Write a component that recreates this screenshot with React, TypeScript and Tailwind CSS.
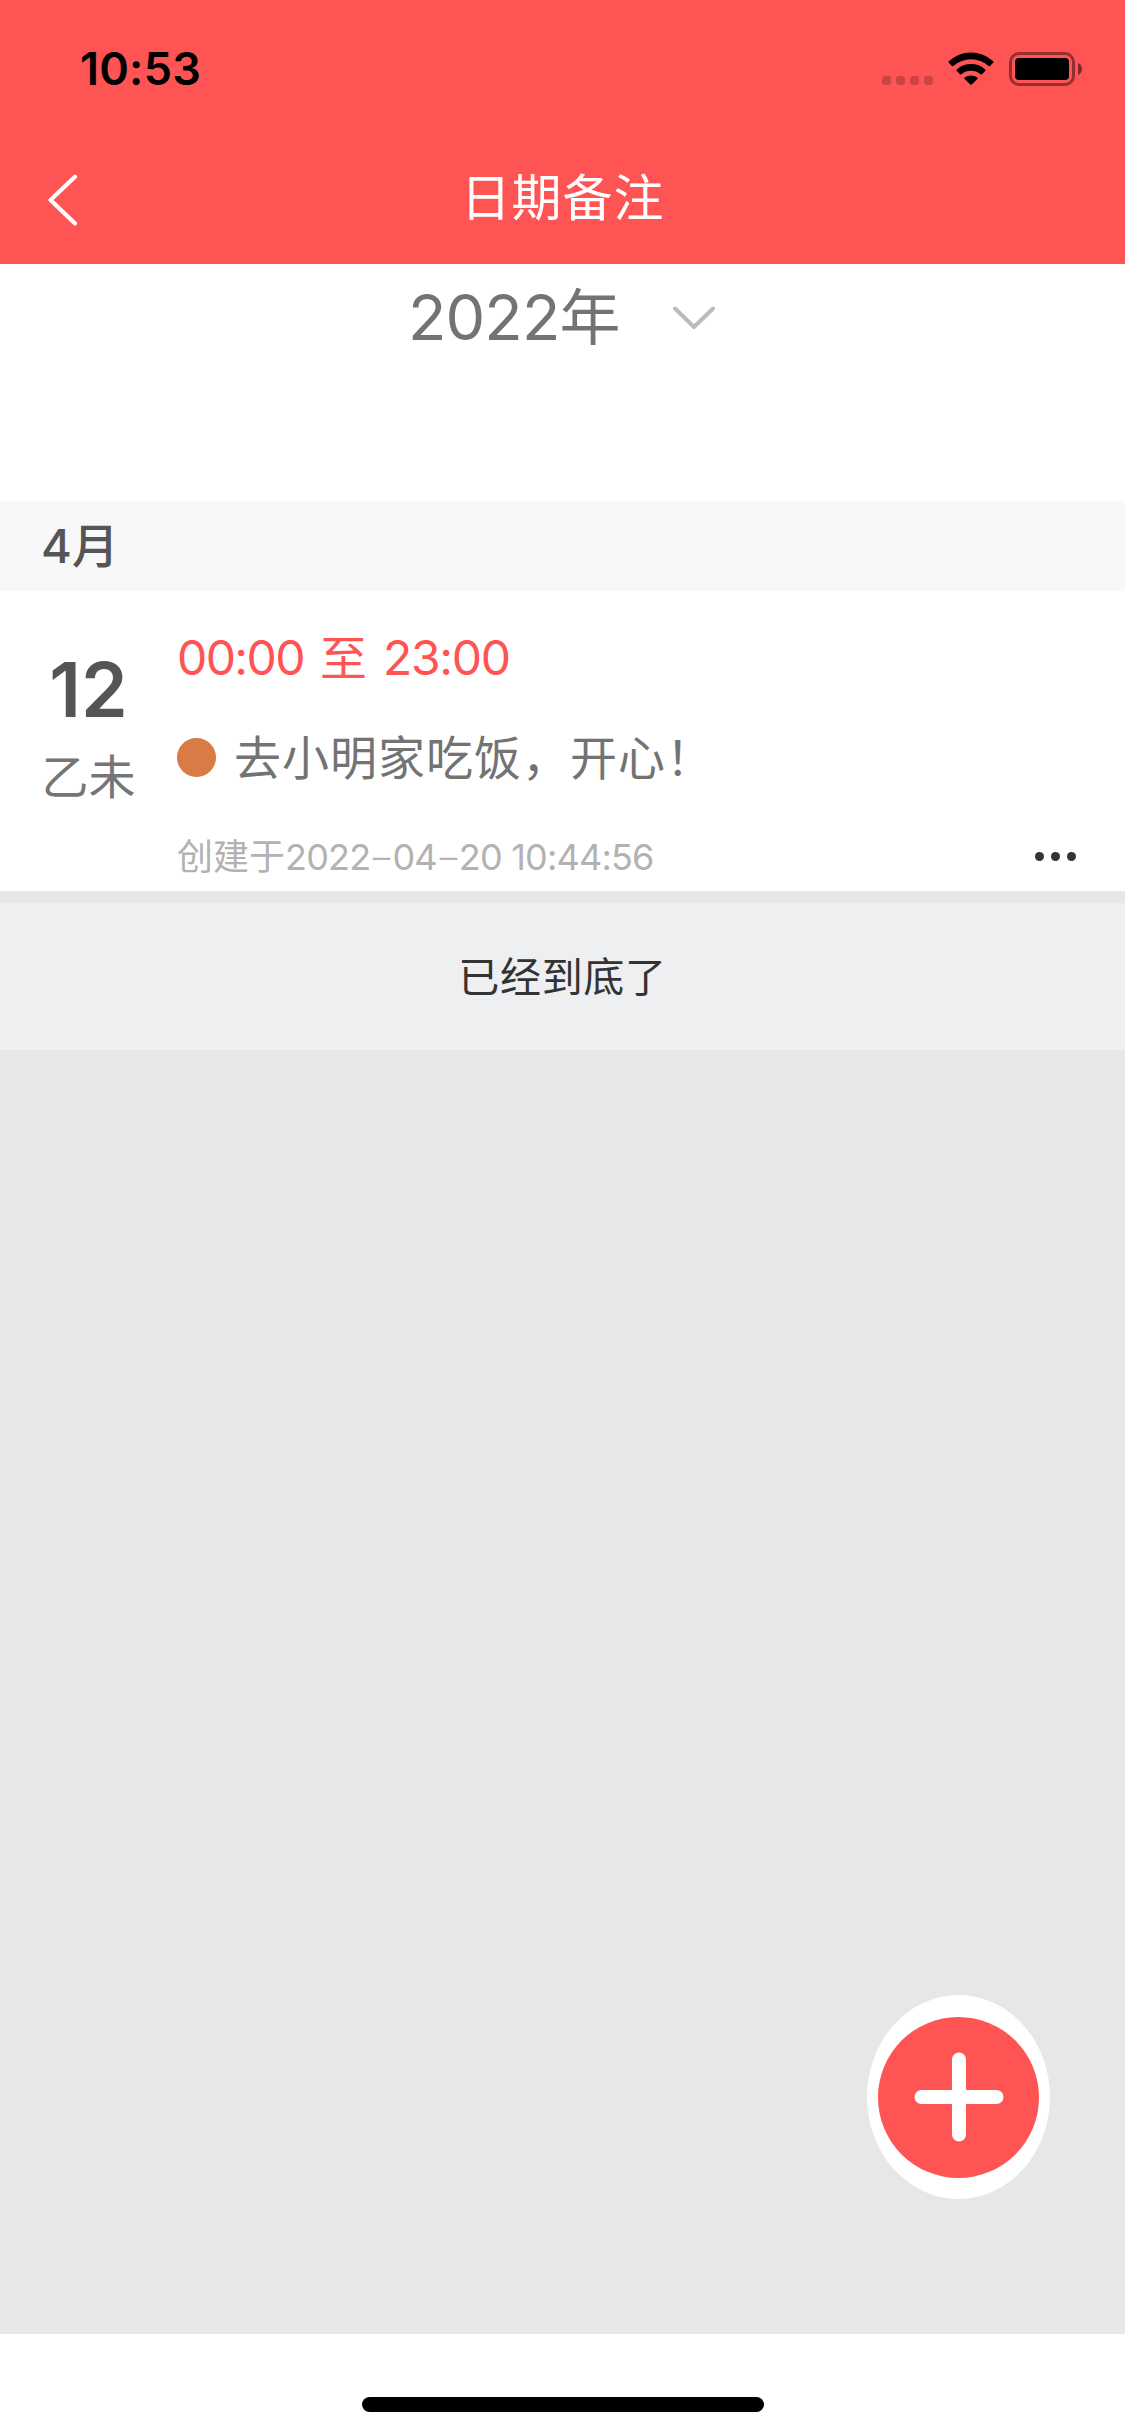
import type { ReactNode } from "react";

function Num({ children, className = "" }: { children: ReactNode; className?: string }) {
  return <span className={`font-['Inter',sans-serif] ${className}`}>{children}</span>;
}

function Dash() {
  return <span className="inline-block w-[22px] scale-x-[1.6] text-center font-light">-</span>;
}

function StatusBar() {
  return (
    <div className="flex h-[132px] items-start justify-between pl-[80px] pr-[43px] text-black">
      <Num className="mt-[41px] text-[45px] leading-[56px] font-semibold tracking-[0.200px]">10:53</Num>
      <div className="mt-[52px] flex items-start">
        <div className="mt-[24px] flex gap-[5px]">
          {[0, 1, 2, 3].map((i) => (
            <span key={i} className="size-[9px] rounded-[3px] bg-black/20" />
          ))}
        </div>
        <svg className="ml-[15px] h-[33px] w-[46px]" viewBox="0 0 46 33">
          <path d="M0.8 9.2Q0 10 0.8 10.700L4 14Q4.600 14.600 5.400 14A26.5 26.5 0 0 1 40.600 14Q41.400 14.600 42 14L45.200 10.700Q46 10 45.200 9.200A32.6 32.6 0 0 0 0.8 9.2Z" />
          <path d="M8.800 17.500Q8 18.200 8.800 19L12 22.200Q12.600 22.800 13.400 22.200A15.2 15.2 0 0 1 32.600 22.200Q33.400 22.800 34 22.200L37.200 19Q38 18.200 37.200 17.500A21.3 21.3 0 0 0 8.800 17.500Z" />
          <path d="M16.600 25.600Q16 26.300 16.600 27L22.300 32.600Q23 33.300 23.700 32.600L29.400 27Q30 26.300 29.400 25.600A10.500 10.500 0 0 0 16.600 25.600Z" />
        </svg>
        <svg className="ml-[15px] h-[34px] w-[73px]" viewBox="0 0 73 34">
          <rect x="1.5" y="1.5" width="63" height="31" rx="8.5" fill="none" stroke="#000" strokeOpacity="0.42" strokeWidth="3" />
          <rect x="6" y="6" width="54" height="22" rx="4" />
          <path d="M69 11Q73 12.500 73 17T69 23Z" fillOpacity="0.5" />
        </svg>
      </div>
    </div>
  );
}

function Header() {
  return (
    <header className="h-[264px] bg-[#ff5454]">
      <StatusBar />
      <div className="grid h-[132px] grid-cols-[120px_1fr_120px] items-start">
        <svg className="mt-[42px] ml-[47px] h-[52px] w-[32px]" viewBox="0 0 32 52" fill="none" stroke="#fff" strokeWidth="4.200" strokeLinecap="round" strokeLinejoin="round">
          <path d="M28 2.800L3.500 26L28 49.500" />
        </svg>
        <h1 className="mt-[26px] text-center text-[50px] leading-[72px] tracking-[0.900px] text-white">日期备注</h1>
      </div>
    </header>
  );
}

function YearPicker() {
  return (
    <div className="flex h-[237px] items-start pt-[10px] pl-[408px]">
      <span className="text-[61px] leading-[80px] text-[#737373]">
        <Num className="text-[63px] tracking-[-0.900px]">2022</Num>年
      </span>
      <svg className="mt-[31px] ml-[52px] h-[26px] w-[44px]" viewBox="0 0 44 26" fill="none" stroke="#bbb" strokeWidth="4" strokeLinecap="round" strokeLinejoin="round">
        <path d="M3 3.500L22 22L41 3.500" />
      </svg>
    </div>
  );
}

function NoteItem() {
  return (
    <article className="flex h-[300px] bg-white">
      <div className="flex w-[177px] flex-col items-center pt-[54px]">
        <Num className="text-[75px] leading-[90px] font-semibold text-[#555]">12</Num>
        <span className="mt-[5px] text-[47px] leading-[68px] text-[#757575]">乙未</span>
      </div>
      <div className="flex flex-1 flex-col pt-[30px] pr-[49px]">
        <div className="flex h-[71px] items-baseline text-[47px] leading-[68px] text-[#ff5454]">
          <Num className="w-[126px] text-[48px] tracking-[-1.600px]">00:00</Num>
          <span className="mr-[16px] ml-[17px]">至</span>
          <Num className="text-[48px] tracking-[-1.300px]">23:00</Num>
        </div>
        <div className="mt-[31px] flex items-center">
          <span className="size-[39px] rounded-full bg-[#d97b45]" />
          <span className="relative -top-[2px] ml-[18px] text-[47px] leading-[68px] tracking-[1px] text-[#737373]">去小明家吃饭，开心！</span>
        </div>
        <div className="mt-[38px] flex items-center justify-between">
          <span className="relative -top-px text-[36px] leading-[52px] text-[#b2b2b2]">
            创建于<Num className="text-[36px] tracking-[-0.800px]">2022<Dash />04<Dash />20 10:44:56</Num>
          </span>
          <span className="flex gap-[7px]">
            {[0, 1, 2].map((i) => (
              <span key={i} className="size-[9px] rounded-full bg-[#333]" />
            ))}
          </span>
        </div>
      </div>
    </article>
  );
}

function AddButton() {
  return (
    <button className="absolute top-[1995px] left-[867px] flex h-[204px] w-[183px] items-center justify-center rounded-[50%] bg-white" aria-label="添加">
      <span className="flex size-[161px] items-center justify-center rounded-full bg-[#ff5454]">
        <svg className="size-[90px]" viewBox="0 0 90 90" stroke="#fff" strokeWidth="14" strokeLinecap="round">
          <path d="M45 7.500V82.500M7.500 45H82.500" />
        </svg>
      </span>
    </button>
  );
}

export default function App() {
  return (
    <div className="relative flex h-[2436px] w-[1125px] flex-col overflow-hidden bg-white font-['Noto_Sans_CJK_SC',sans-serif]">
      <Header />
      <YearPicker />
      <div className="flex h-[90px] items-center bg-[#f8f8f8] pb-[4px] pl-[41px] text-[47px] leading-[68px] font-medium text-[#555]">
        <span><Num className="text-[47px]">4</Num>月</span>
      </div>
      <NoteItem />
      <main className="flex-1 bg-[#e7e7e7] pt-[12px]">
        <div className="flex h-[147px] items-center justify-center bg-[#eeeff1] pb-[5px] text-[41px] leading-[60px] tracking-[0.700px] text-[#333]">
          已经到底了
        </div>
      </main>
      <footer className="flex h-[102px] justify-center bg-white pt-[63px]">
        <span className="h-[15px] w-[402px] rounded-full bg-black" />
      </footer>
      <AddButton />
    </div>
  );
}
